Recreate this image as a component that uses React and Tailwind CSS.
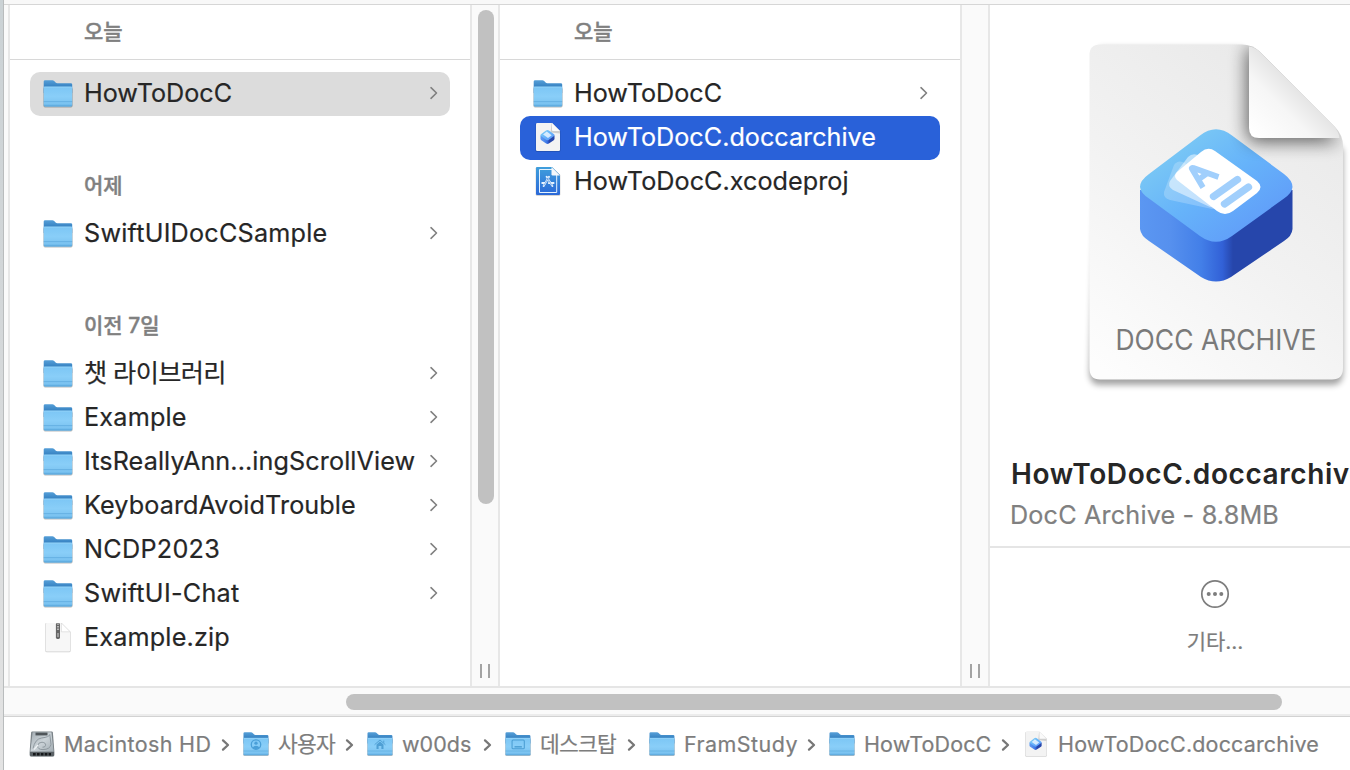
import React from "react";

const FONT = "font-['Inter','Noto_Sans_CJK_KR',sans-serif]";

function Folder({ className, glyph }) {
  return (
    <svg viewBox="0 0 32 30" className={className}>
      <defs>
        <linearGradient id="folderFront" x1="0" y1="0" x2="0" y2="1">
          <stop offset="0" stopColor="#7cc6f5" />
          <stop offset="0.5" stopColor="#89cef8" />
          <stop offset="1" stopColor="#76bfee" />
        </linearGradient>
        <linearGradient id="folderBack" x1="0" y1="0" x2="0" y2="1">
          <stop offset="0" stopColor="#559fd8" />
          <stop offset="0.45" stopColor="#3a85c4" />
          <stop offset="1" stopColor="#3a85c4" />
        </linearGradient>
      </defs>
      <rect x="1.4" y="9.4" width="29.2" height="20" rx="1.6" fill="#000" opacity="0.28" />
      <path d="M1.700 3.400Q1.700 2.200 3.100 2.200H10.400Q11.400 2.200 12.200 2.900L13.600 4.400Q14.300 5.200 15.300 5.200H28.800Q30.200 5.200 30.200 6.600V15H1.700Z" fill="url(#folderBack)" />
      <path d="M1.700 9.400Q1.700 8.700 2.500 8.700H29.400Q30.200 8.700 30.200 9.400V27Q30.200 28.400 28.800 28.400H3.100Q1.700 28.400 1.700 27Z" fill="url(#folderFront)" />
      <path d="M2.200 9H29.700" stroke="#a2dafb" strokeWidth="0.7" />
      <path d="M1.700 23.600H30.200" stroke="#5aa9dc" strokeWidth="0.7" />
      <path d="M1.700 26.800H30.200V27Q30.200 28.400 28.800 28.400H3.100Q1.700 28.400 1.700 27Z" fill="#62aee1" />
      {glyph === "user" && (
        <g fill="none" stroke="#4a9fd8" strokeWidth="1.5">
          <circle cx="16" cy="16.2" r="5.4" />
          <circle cx="16" cy="14.6" r="1.9" fill="#4a9fd8" stroke="none" />
          <path d="M12.200 19.900Q13 17.600 16 17.600T19.800 19.900Q18 21.600 16 21.600T12.200 19.900Z" fill="#4a9fd8" stroke="none" />
        </g>
      )}
      {glyph === "home" && (
        <g fill="none" stroke="#4f9fd4" strokeWidth="1.1">
          <path d="M9.800 16.400L16 11L22.200 16.400M20.300 11.700V14.200" />
          <path d="M12 16L16 12.700L20 16V21.400H17.600V17.900H14.400V21.400H12Z" fill="#4f9fd4" stroke="none" />
        </g>
      )}
      {glyph === "desktop" && (
        <g fill="none" stroke="#4a9dd3" strokeWidth="1.200">
          <rect x="9.200" y="11" width="14" height="10" rx="1.200" />
          <path d="M12 18.800H20.400" strokeWidth="1.600" />
        </g>
      )}
    </svg>
  );
}

function Cube() {
  return (
    <g>
      <path d="M1140 190V229Q1141 236 1149 241L1201 277Q1216 286 1231 277L1284 241Q1292 236 1292.500 229V190Z" fill="url(#cubeSide)" />
      <path d="M1149 174L1200 135.500Q1216 123 1232 135.500L1284 174Q1292.500 180.500 1292.500 187Q1292 193 1284 198.500L1232 236Q1216 247.500 1200 236L1149 198.500Q1140.500 193 1140 187Q1140 180.500 1149 174Z" fill="url(#cubeTop)" />
    </g>
  );
}

function CubeDefs() {
  return (
    <defs>
      <linearGradient id="cubeSide" x1="0" y1="0" x2="1" y2="0">
        <stop offset="0" stopColor="#5b97f2" />
        <stop offset="0.2" stopColor="#5690ee" />
        <stop offset="0.4" stopColor="#437fe8" />
        <stop offset="0.54" stopColor="#3261d7" />
        <stop offset="0.61" stopColor="#2646ab" />
        <stop offset="1" stopColor="#2646ab" />
      </linearGradient>
      <linearGradient id="cubeTop" x1="0.1" y1="0.2" x2="0.8" y2="0.9">
        <stop offset="0" stopColor="#7ccaf4" />
        <stop offset="0.5" stopColor="#66b3fa" />
        <stop offset="1" stopColor="#609cf9" />
      </linearGradient>
      <linearGradient id="paper" x1="0.7" y1="0" x2="0.1" y2="1">
        <stop offset="0" stopColor="#e9e9e9" />
        <stop offset="0.5" stopColor="#f2f2f2" />
        <stop offset="1" stopColor="#fdfdfd" />
      </linearGradient>
      <linearGradient id="curl" gradientUnits="userSpaceOnUse" x1="1254" y1="134" x2="1299" y2="89">
        <stop offset="0" stopColor="#ffffff" />
        <stop offset="0.6" stopColor="#f6f6f6" />
        <stop offset="1" stopColor="#e4e4e4" />
      </linearGradient>
    </defs>
  );
}

function DocIcon({ className }) {
  return (
    <svg viewBox="0 0 30 32" className={className}>
      <CubeDefs />
      <path d="M2.600 3.200Q2.600 2 4.700 2H19L27.400 10V29.400Q27.400 30.800 26 30.800H4Q2.600 30.800 2.600 29.400Z" fill="#000" opacity="0.2" />
      <path d="M3 3.200Q3 2 4.200 2H19L27 10V28.800Q27 30 25.800 30H4.200Q3 30 3 28.800Z" fill="#f3f3f3" />
      <path d="M18.600 2L17.600 11.400L27 12.400V10Z" fill="#a9a9a9" opacity="0.5" />
      <path d="M19 2L27 10H20Q19 10 19 9Z" fill="#fafafa" />
      <g transform="translate(-97.400 -3) scale(0.092)">
        <Cube />
        <path d="M1168 180L1208 148L1262 188L1222 218Z" fill="#e8f5ff" opacity="0.85" />
      </g>
    </svg>
  );
}

function XcodeIcon({ className }) {
  return (
    <svg viewBox="0 0 30 32" className={className}>
      <defs>
        <linearGradient id="xc" x1="0" y1="0" x2="0" y2="1">
          <stop offset="0" stopColor="#3f9fdc" />
          <stop offset="1" stopColor="#2a68d8" />
        </linearGradient>
      </defs>
      <path d="M2.700 3.200Q2.700 2 4.200 2H19L27.300 10V29.400Q27.300 30.800 25.800 30.800H4.200Q2.700 30.800 2.700 29.400Z" fill="#000" opacity="0.22" />
      <path d="M3 3.200Q3 2 4.200 2H19L27 10V28.800Q27 30 25.800 30H4.200Q3 30 3 28.800Z" fill="url(#xc)" />
      <path d="M19 4.500H6.500V27.500H23.700V10" fill="none" stroke="#e4f2ff" strokeWidth="1" />
      <path d="M18.500 2L27 10.500H19.700Q18.500 10.500 18.500 9.300Z" fill="#f3f7fb" />
      <g stroke="#e8f4ff" strokeWidth="1.900" fill="none" strokeLinecap="round">
        <path d="M16 11.800L10.600 21M13.600 11.800L19.400 21M9.200 18H12.200M15.800 18H20.600" />
      </g>
      <path d="M15.600 12.600L10.800 20.600M14 12.600L19 20.600" stroke="#3980d9" strokeWidth="0.600" />
    </svg>
  );
}

function ZipIcon({ className }) {
  return (
    <svg viewBox="0 0 30 32" className={className}>
      <path d="M2.200 3.200Q2.200 2 3.600 2H18.400L27.700 11.200V29.800Q27.700 31.200 26.400 31.200H3.600Q2.200 31.200 2.200 29.800Z" fill="#000" opacity="0.200" />
      <path d="M2.700 3.200Q2.700 2 3.800 2H18.400L27.200 10.800V29.200Q27.200 30.500 26 30.500H3.800Q2.700 30.500 2.700 29.200Z" fill="#f7f7f7" />
      <path d="M18.400 2V10.800H27.200Z" fill="#fff" stroke="#d0d0d0" strokeWidth="0.600" />
      <rect x="12.900" y="2" width="4.100" height="16" rx="1.400" fill="#666" />
      <path d="M15 2.400V10" stroke="#ccc" strokeWidth="1.600" strokeDasharray="1.400 1.200" />
      <path d="M15 12V16" stroke="#b9b9b9" strokeWidth="1.300" />
    </svg>
  );
}

function DriveIcon({ className }) {
  return (
    <svg viewBox="0 0 28 28" className={className}>
      <defs>
        <linearGradient id="drive" x1="0" y1="0" x2="1" y2="1">
          <stop offset="0" stopColor="#a4adb3" />
          <stop offset="0.5" stopColor="#cbd3d8" />
          <stop offset="1" stopColor="#a3adb3" />
        </linearGradient>
      </defs>
      <path d="M4.200 1.500H23.800Q24.700 1.500 24.900 2.500L26.400 22V25Q26.400 26.600 24.800 26.600H3.200Q1.600 26.600 1.600 25V22L3.100 2.500Q3.300 1.500 4.200 1.500Z" fill="#7b8388" />
      <path d="M4.600 2.200H23.400L25.600 21.600H2.400Z" fill="url(#drive)" />
      <rect x="7.500" y="2.600" width="12" height="2.800" fill="#4f5559" />
      <path d="M5 18.500Q7 9 13.500 8Q21.500 7 21.800 4.500L23 14.500Q22 19.400 15 19.600Q9.600 19.600 9.600 15.800Q10 12.400 14 12.200Q18 12.600 17.600 15.400Q17 17.600 14.500 17.200" fill="none" stroke="#89939a" strokeWidth="0.900" />
      <path d="M6 19.500L10 15" stroke="#eef2f4" strokeWidth="1.200" />
      <path d="M2 22H26V25Q26 26.300 24.700 26.300H3.300Q2 26.300 2 25Z" fill="#5a6165" />
      <path d="M5 24.300H23" stroke="#15181a" strokeWidth="2.400" strokeDasharray="2.700 1.200" />
    </svg>
  );
}

function Chevron() {
  return (
    <svg viewBox="0 0 10 16" className="h-4 w-2.5 shrink-0">
      <path d="M2 2.700L7.500 8L2 13.300" fill="none" stroke="#808080" strokeWidth="1.600" strokeLinecap="round" strokeLinejoin="round" />
    </svg>
  );
}

function Row({ name, icon = "folder", state, spacing = "tracking-normal", leaf }) {
  const bg = state === "selected" ? "bg-[#2961d9] text-white" : state === "path" ? "bg-[#dcdcdc] text-[#262626]" : "text-[#262626]";
  return (
    <div className={`flex h-11 items-center rounded-[10px] pr-[11px] pb-0.5 pl-3 ${bg}`}>
      {icon === "folder" && <Folder className="h-[30px] w-8 shrink-0" />}
      {icon === "doc" && <DocIcon className="ml-px h-8 w-[30px] shrink-0" />}
      {icon === "xcode" && <XcodeIcon className="ml-px h-8 w-[30px] shrink-0" />}
      {icon === "zip" && <ZipIcon className="ml-px h-8 w-[30px] shrink-0" />}
      <span className={`min-w-0 grow whitespace-nowrap text-[25.2px] leading-[42px] [-webkit-text-stroke:0.2px] ${icon === "folder" ? "ml-2.5" : "ml-[11px]"} ${spacing}`}>{name}</span>
      {!leaf && <Chevron />}
    </div>
  );
}

function Heading({ children, className = "" }) {
  return <div className={`pl-[54px] text-[21px] font-medium text-[#808080] [-webkit-text-stroke:0.4px] ${className}`}>{children}</div>;
}

function Divider({ thumb }) {
  return (
    <div className="flex w-[30px] shrink-0 flex-col items-center justify-between border-x-2 border-[#e7e7e7] bg-[#fafafa] pt-[5px] pb-2">
      <div className={`ml-0.5 w-4 rounded-full ${thumb ? "h-[494px] bg-[#c1c1c1]" : ""}`} />
      <div className="flex h-3.5 gap-1.5">
        <span className="w-0.5 bg-[#a3a3a3]" />
        <span className="w-0.5 bg-[#a3a3a3]" />
      </div>
    </div>
  );
}

function Preview() {
  return (
    <svg viewBox="1070 30 280 370" className="ml-20 h-[370px] w-[280px] shrink-0">
      <CubeDefs />
      <defs>
        <filter id="blur4" x="-20%" y="-20%" width="140%" height="140%"><feGaussianBlur stdDeviation="3" /></filter>
        <filter id="blur9" x="-50%" y="-50%" width="200%" height="200%"><feGaussianBlur stdDeviation="9" /></filter>
        <clipPath id="sheet"><path d="M1100 44.500H1242Q1252 44.500 1259 51L1335 127Q1343 135 1343 146V368Q1343 379.500 1332 379.500H1100Q1089.500 379.500 1089.500 368V55Q1089.500 44.500 1100 44.500Z" /></clipPath>
      </defs>
      <path d="M1100 48H1242L1343 150V372Q1343 385 1332 385H1100Q1089.500 385 1089.500 372Z" fill="#000" opacity="0.36" filter="url(#blur4)" />
      <path d="M1100 44.500H1242Q1252 44.500 1259 51L1335 127Q1343 135 1343 146V368Q1343 379.500 1332 379.500H1100Q1089.500 379.500 1089.500 368V55Q1089.500 44.500 1100 44.500Z" fill="url(#paper)" />
      <Cube />
      <g>
        <path d="M1164 192L1174 165Q1178 159 1185 163L1222 209H1212L1170 200Q1163 198 1164 192Z" fill="#fff" opacity="0.22" />
        <path d="M1170 181L1188 157Q1193 152 1200 156L1222 209L1210 207L1173 190Q1167 186 1170 181Z" fill="#fff" opacity="0.5" />
        <path d="M1177 172L1201 152Q1208 146 1215 151L1257 181Q1264 187 1257 193L1233 211Q1225 217 1217 211L1177 180Q1173 176 1177 172Z" fill="#fff" />
        <path d="M1203 187.500L1192 169Q1191 167.500 1193.500 168L1218.500 177M1198.500 179.500L1207 173.500" fill="none" stroke="#a1cffc" strokeWidth="5.600" strokeLinejoin="round" />
        <path d="M1213.500 196.500L1237.500 179.500M1224.500 204L1248.500 187" stroke="#a1cffc" strokeWidth="7.300" strokeLinecap="round" />
      </g>
      <g clipPath="url(#sheet)">
        <path d="M1247 50V132Q1247 142 1257 142H1340L1255 45Z" fill="#000" opacity="0.6" filter="url(#blur9)" />
      </g>
      <path d="M1249 46.500Q1255 47 1260 52L1334 126Q1339 132 1339.500 138H1259Q1249 138 1249 128Z" fill="url(#curl)" />
      <text x="1115.500" y="350" textLength="201" lengthAdjust="spacingAndGlyphs" fill="#7a7a7a" fontSize="28" fontWeight="400" fontFamily="Inter, sans-serif">DOCC ARCHIVE</text>
    </svg>
  );
}

function Crumb({ width, icon, label, glyph, last, spacing = "" }) {
  return (
    <div className={`flex shrink-0 items-center ${width}`}>
      {icon === "drive" && <DriveIcon className="h-7 w-7 shrink-0" />}
      {icon === "doc" && <DocIcon className="ml-px h-7 w-[26px] shrink-0" />}
      {!icon && <Folder glyph={glyph} className="h-[27px] w-[28px] shrink-0" />}
      <span className={`mt-px whitespace-nowrap text-[21.5px] [-webkit-text-stroke:0.2px] ${icon === "doc" ? "ml-[9px]" : "ml-2"} ${spacing}`}>{label}</span>
      {!last && (
        <svg viewBox="0 0 10 14" className="mt-0.5 mr-[11px] ml-auto h-3.5 w-2.5 shrink-0">
          <path d="M2 2.400L7 7L2 11.600" fill="none" stroke="#777" strokeWidth="2.300" strokeLinecap="round" strokeLinejoin="round" />
        </svg>
      )}
    </div>
  );
}

export default function App() {
  return (
    <div className={`flex h-[770px] w-[1350px] overflow-hidden bg-white ${FONT}`}>
      <div className="w-1 shrink-0 border-r border-[#b9bcbd] bg-gradient-to-b from-[#cbd2d5] via-[#d2d6d8] via-35% to-[#e3e3e3]" />
      <div className="flex w-[1346px] shrink-0 flex-col">
        <div className="h-[5px] shrink-0 border-b border-[#d6d6d6] bg-[#f8f8f8]" />
        <div className="flex h-[681px] shrink-0">
          <div className="w-1.5 shrink-0 border-r-2 border-[#e7e7e7] bg-[#fafafa]" />
          <section className="flex w-[460px] shrink-0 flex-col">
            <div className="flex h-[55px] shrink-0 items-center border-b border-[#d8d8d8] px-5">
              <Heading>오늘</Heading>
            </div>
            <div className="flex flex-col px-5 pt-3">
              <Row name="HowToDocC" state="path" />
              <Heading className="flex h-24 items-end pb-[11px] leading-[30px]">어제</Heading>
              <Row name="SwiftUIDocCSample" spacing="tracking-[0.22px]" />
              <Heading className="flex h-24 items-end pb-[11px] leading-[30px]">이전 7일</Heading>
              <Row name="챗 라이브러리" spacing="tracking-[-0.6px]" />
              <Row name="Example" spacing="tracking-[0.2px]" />
              <Row name="ItsReallyAnn...ingScrollView" spacing="tracking-[0.09px]" />
              <Row name="KeyboardAvoidTrouble" spacing="tracking-[0.1px]" />
              <Row name="NCDP2023" spacing="tracking-[0.28px]" />
              <Row name="SwiftUI-Chat" spacing="tracking-[0.26px]" />
              <Row name="Example.zip" icon="zip" leaf spacing="tracking-[0.17px]" />
            </div>
          </section>
          <Divider thumb />
          <section className="flex w-[460px] shrink-0 flex-col">
            <div className="flex h-[55px] shrink-0 items-center border-b border-[#d8d8d8] px-5">
              <Heading>오늘</Heading>
            </div>
            <div className="flex flex-col px-5 pt-3">
              <Row name="HowToDocC" />
              <Row name="HowToDocC.doccarchive" icon="doc" state="selected" leaf />
              <Row name="HowToDocC.xcodeproj" icon="xcode" leaf spacing="tracking-[0.04px]" />
            </div>
          </section>
          <Divider />
          <section className="flex w-[360px] shrink-0 flex-col overflow-hidden pt-[25px]">
            <Preview />
            <div className="mt-[54px] pl-[21px] text-[28px] leading-10 font-semibold tracking-[0.58px] whitespace-nowrap text-[#262626]">HowToDocC.doccarchive</div>
            <div className="h-[54px] shrink-0 border-b-2 border-[#e5e5e5] pl-5 text-[25.2px] leading-[42px] tracking-[0.17px] whitespace-nowrap text-[#808080] [-webkit-text-stroke:0.2px]">DocC Archive - 8.8MB</div>
            <div className="flex w-[450px] flex-col items-center pt-[31px] text-[#7d7d7d]">
              <svg viewBox="0 0 30 30" className="h-[30px] w-[30px]">
                <circle cx="15" cy="15" r="13.200" fill="none" stroke="currentColor" strokeWidth="1.700" />
                <g fill="currentColor">
                  <circle cx="8.700" cy="15" r="2" />
                  <circle cx="15" cy="15" r="2" />
                  <circle cx="21.300" cy="15" r="2" />
                </g>
              </svg>
              <div className="mt-[17px] text-[21px] leading-8 tracking-[-0.1px] [-webkit-text-stroke:0.2px]">기타...</div>
            </div>
          </section>
        </div>
        <div className="flex h-[31px] shrink-0 border-t-2 border-b border-t-[#e5e5e5] border-b-[#d2d2d2] bg-[#fafafa] pt-1.5 pl-[342px] shadow-[inset_0_-2px_0_#ececec]">
          <div className="h-4 w-[936px] rounded-full bg-[#c1c1c1]" />
        </div>
        <div className="flex h-[53px] shrink-0 items-center pl-6 text-[#7d7d7d]">
          <Crumb icon="drive" label="Macintosh HD" width="w-[214px]" spacing="tracking-[0.36px]" />
          <Crumb glyph="user" label="사용자" width="w-[124px]" spacing="tracking-[-0.8px]" />
          <Crumb glyph="home" label="w00ds" width="w-[138px]" />
          <Crumb glyph="desktop" label="데스크탑" width="w-[144px]" spacing="tracking-[-0.8px]" />
          <Crumb label="FramStudy" width="w-[180px]" spacing="tracking-[0.45px]" />
          <Crumb label="HowToDocC" width="w-[194px]" spacing="tracking-[0.1px]" />
          <Crumb icon="doc" label="HowToDocC.doccarchive" width="w-[300px]" last spacing="tracking-[0.16px]" />
        </div>
      </div>
    </div>
  );
}
